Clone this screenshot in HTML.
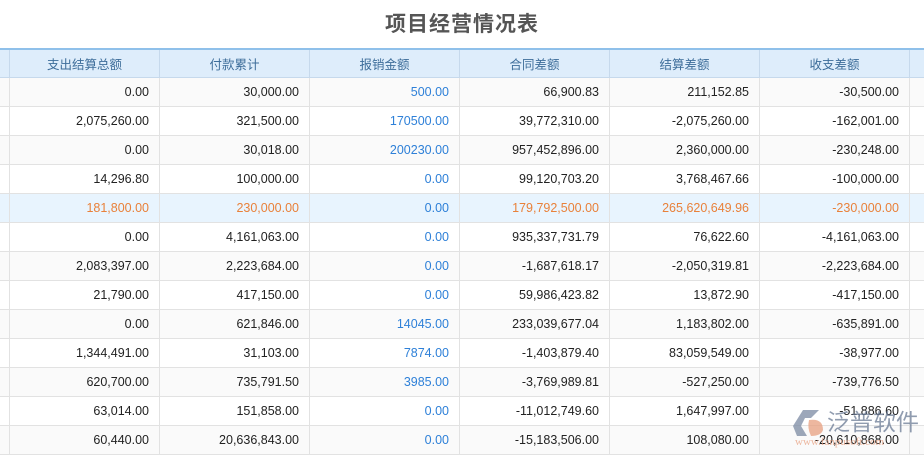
<!DOCTYPE html>
<html><head><meta charset="utf-8"><style>
body{margin:0;width:924px;height:454px;overflow:hidden;background:#fff;font-family:"Liberation Sans","Noto Sans CJK SC",sans-serif;position:relative}
.title{position:absolute;top:8px;left:0;width:924px;text-align:center;font-size:21px;font-weight:bold;color:#555;font-family:"Noto Sans CJK SC",sans-serif;letter-spacing:1px}
table{position:absolute;top:48px;left:-141px;width:1200px;border-collapse:collapse;table-layout:fixed}
td,th{height:29px;border:1px solid #e2e2e2;font-size:12.5px;text-align:right;padding:0 10px 0 0;box-sizing:border-box;color:#222;white-space:nowrap;overflow:hidden}
th{height:28px;background:#deedfb;color:#3d6d9a;font-weight:normal;text-align:center;padding:0;border-color:#c6d9ec;border-top:2px solid #8fc0ea;font-family:"Noto Sans CJK SC",sans-serif}
tr:nth-child(even) td{background:#fafafa}
tr.h td{background:#e8f4fe;color:#e9813a}
.b{color:#2e80d8}
tr.h td.b{color:#2e80d8}
.logo{position:absolute;left:793px;top:406px;width:131px;height:46px;opacity:.75;white-space:nowrap}
.logo .t{position:absolute;left:34px;top:0;font-size:23px;line-height:28px;color:#6b7b95;font-family:"Noto Sans CJK SC",sans-serif;letter-spacing:0}
.logo .u{position:absolute;left:2px;top:30px;font-size:11px;color:#e8a080;font-family:"Liberation Serif",serif}
</style></head><body>
<div class="title">项目经营情况表</div>
<table>
<colgroup><col style="width:150px"><col style="width:150px"><col style="width:150px"><col style="width:150px"><col style="width:150px"><col style="width:150px"><col style="width:150px"><col style="width:150px"></colgroup>
<tr><th></th><th>支出结算总额</th><th>付款累计</th><th>报销金额</th><th>合同差额</th><th>结算差额</th><th>收支差额</th><th></th></tr>
<tr><td></td><td>0.00</td><td>30,000.00</td><td class="b">500.00</td><td>66,900.83</td><td>211,152.85</td><td>-30,500.00</td><td></td></tr>
<tr><td></td><td>2,075,260.00</td><td>321,500.00</td><td class="b">170500.00</td><td>39,772,310.00</td><td>-2,075,260.00</td><td>-162,001.00</td><td></td></tr>
<tr><td></td><td>0.00</td><td>30,018.00</td><td class="b">200230.00</td><td>957,452,896.00</td><td>2,360,000.00</td><td>-230,248.00</td><td></td></tr>
<tr><td></td><td>14,296.80</td><td>100,000.00</td><td class="b">0.00</td><td>99,120,703.20</td><td>3,768,467.66</td><td>-100,000.00</td><td></td></tr>
<tr class="h"><td></td><td>181,800.00</td><td>230,000.00</td><td class="b">0.00</td><td>179,792,500.00</td><td>265,620,649.96</td><td>-230,000.00</td><td></td></tr>
<tr><td></td><td>0.00</td><td>4,161,063.00</td><td class="b">0.00</td><td>935,337,731.79</td><td>76,622.60</td><td>-4,161,063.00</td><td></td></tr>
<tr><td></td><td>2,083,397.00</td><td>2,223,684.00</td><td class="b">0.00</td><td>-1,687,618.17</td><td>-2,050,319.81</td><td>-2,223,684.00</td><td></td></tr>
<tr><td></td><td>21,790.00</td><td>417,150.00</td><td class="b">0.00</td><td>59,986,423.82</td><td>13,872.90</td><td>-417,150.00</td><td></td></tr>
<tr><td></td><td>0.00</td><td>621,846.00</td><td class="b">14045.00</td><td>233,039,677.04</td><td>1,183,802.00</td><td>-635,891.00</td><td></td></tr>
<tr><td></td><td>1,344,491.00</td><td>31,103.00</td><td class="b">7874.00</td><td>-1,403,879.40</td><td>83,059,549.00</td><td>-38,977.00</td><td></td></tr>
<tr><td></td><td>620,700.00</td><td>735,791.50</td><td class="b">3985.00</td><td>-3,769,989.81</td><td>-527,250.00</td><td>-739,776.50</td><td></td></tr>
<tr><td></td><td>63,014.00</td><td>151,858.00</td><td class="b">0.00</td><td>-11,012,749.60</td><td>1,647,997.00</td><td>-51,886.60</td><td></td></tr>
<tr><td></td><td>60,440.00</td><td>20,636,843.00</td><td class="b">0.00</td><td>-15,183,506.00</td><td>108,080.00</td><td>-20,610,868.00</td><td></td></tr>
</table>
<div class="logo">
<svg width="34" height="30" viewBox="0 0 34 30" style="position:absolute;left:0;top:2px">
<path d="M10 2 L26 2 L18 10 L12 10 L8 18 L14 28 L4 28 L0 18 Z" fill="#7c8aa3"/>
<path d="M16 12 Q30 10 30 22 Q28 28 18 28 Q14 20 16 12 Z" fill="#e8a080"/>
</svg>
<div class="t">泛普软件</div>
<div class="u">www.fanpusoft.com</div>
</div>
</body></html>
